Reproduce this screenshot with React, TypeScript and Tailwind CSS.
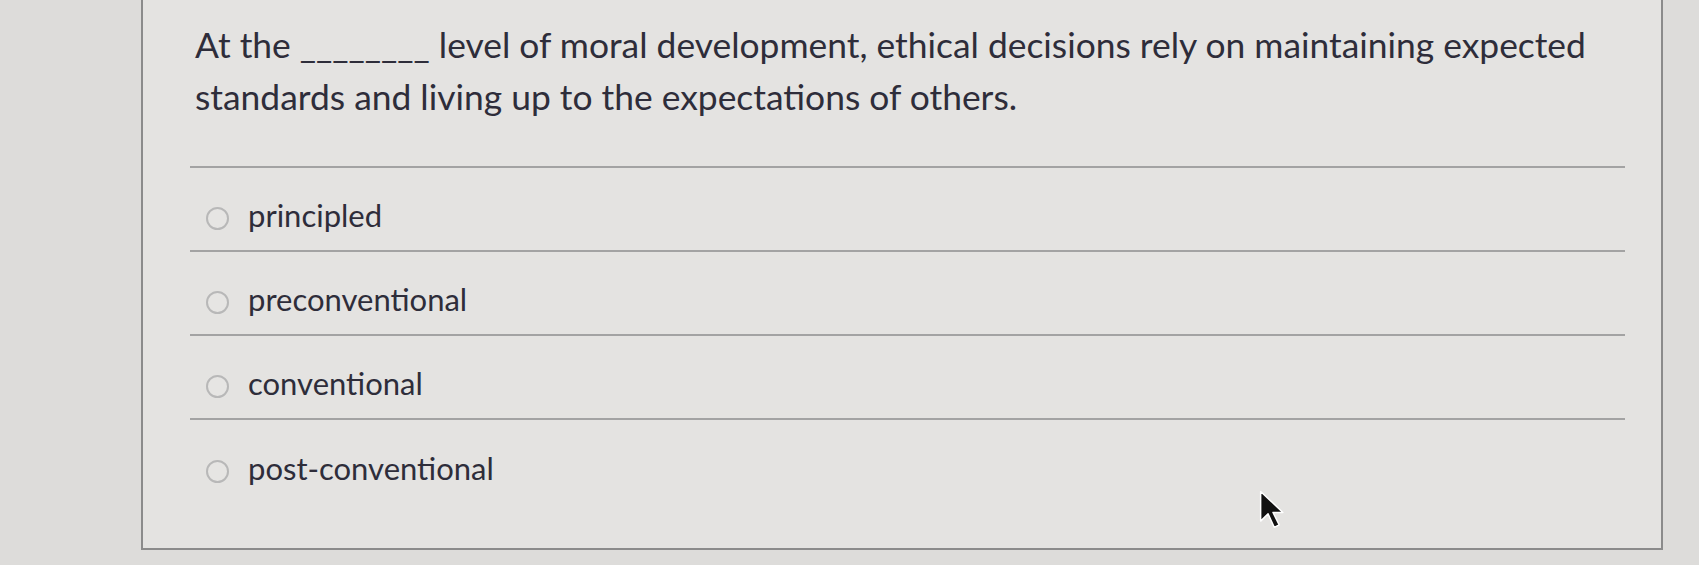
import React from "react";

const options = ["principled", "preconventional", "conventional", "post-conventional"];

export default function App() {
  return (
    <div
      className="w-[1699px] h-[565px] bg-[#dddcda] overflow-hidden flex"
      style={{ fontFamily: "Lato, 'Open Sans', sans-serif" }}
    >
      <div className="ml-[141px] w-[1522px] h-[550px] border-l-2 border-r-2 border-b-2 border-[#8b8b8b] bg-[#e4e3e1] relative">
        <div className="pl-[52px] pt-[19px] text-[35.4px] leading-[52px] text-[#2e2d3a] whitespace-nowrap">
          At the ________ level of moral development, ethical decisions rely on maintaining expected
          <br />
          standards and living up to the expectations of others.
        </div>
        <div className="ml-[47px] mr-[36px] mt-[43px] border-t-2 border-[#a3a3a3]">
          {options.map((o, i) => (
            <div
              key={o}
              className={
                "h-[84px] flex items-center gap-[19px] pl-[16px] pt-[18px] " +
                (i < options.length - 1 ? "border-b-2 border-[#a3a3a3]" : "")
              }
            >
              <span className="w-[23px] h-[23px] rounded-full border-2 border-[#b8b8b8] bg-[#e6e5e3] shrink-0" />
              <span className="text-[31px] text-[#2e2d3a] leading-none pb-[6px]">{o}</span>
            </div>
          ))}
        </div>
        <svg
          className="absolute left-[1115px] top-[489px]"
          width="30"
          height="42"
          viewBox="0 0 24 34"
        >
          <path
            d="M2 2 L2 26 L8 20 L13 31 L17 29 L12 19 L20 19 Z"
            fill="#111"
            stroke="#fff"
            strokeWidth="1.2"
            strokeLinejoin="round"
          />
        </svg>
      </div>
    </div>
  );
}
